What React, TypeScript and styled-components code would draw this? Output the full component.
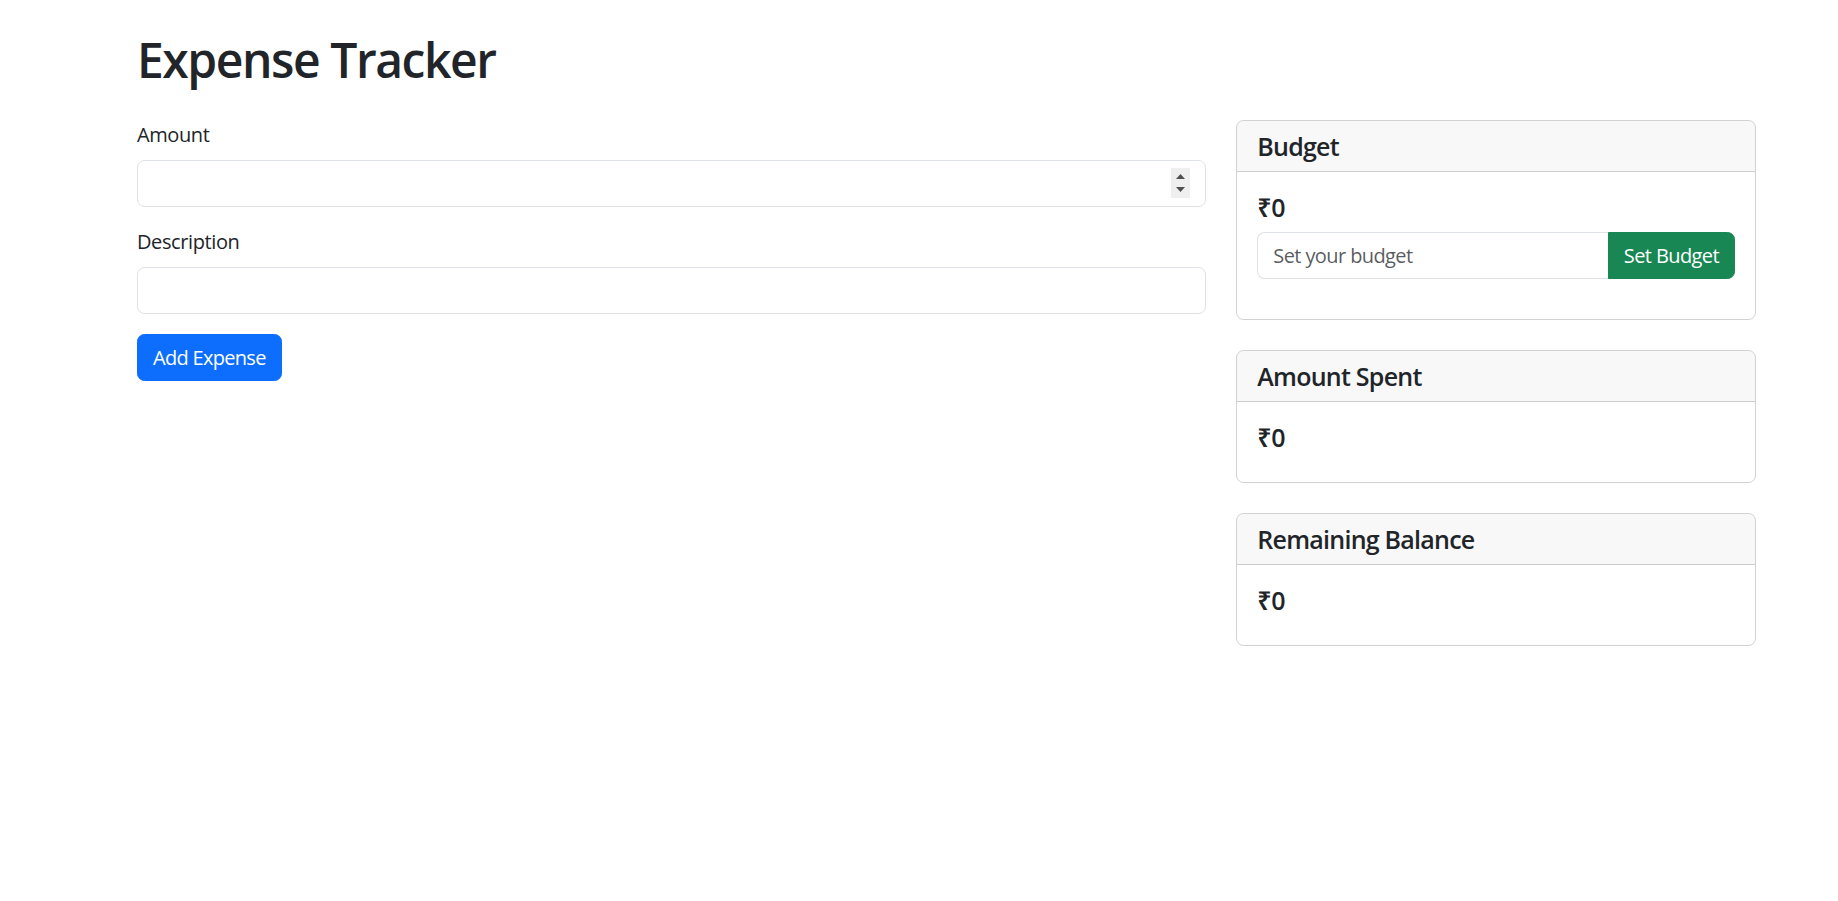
import React from 'react';
import styled, {createGlobalStyle} from "styled-components";

const GlobalStyle = createGlobalStyle`
    * {
        box-sizing: border-box;
    }

    body {
        margin: 0;
        background: #fff;
        color: #212529;
        font-family: "Open Sans", "Noto Sans", sans-serif;
        font-size: 20px;
        line-height: 1.5;
        letter-spacing: -0.02em;
    }
`

const cards = [
    {title: "Amount Spent", value: "₹0"},
    {title: "Remaining Balance", value: "₹0"},
]

export default function App() {
    return (
        <>
            <GlobalStyle/>
            <Container>
                <Title>Expense Tracker</Title>
                <Row>
                    <Col size={66.6667}>
                        <FormGroup>
                            <Label>Amount</Label>
                            <InputWrap>
                                <Input type="number"/>
                                <Spinner>
                                    <svg width="19" height="30" viewBox="0 0 19 30">
                                        <polygon points="5,11 9.5,6 14,11" fill="#505050"/>
                                        <polygon points="5,19 14,19 9.5,24" fill="#505050"/>
                                    </svg>
                                </Spinner>
                            </InputWrap>
                        </FormGroup>
                        <FormGroup>
                            <Label>Description</Label>
                            <Input type="text"/>
                        </FormGroup>
                        <Button color="#0d6efd">Add Expense</Button>
                    </Col>
                    <Col size={33.3333}>
                        <Card>
                            <CardHeader>Budget</CardHeader>
                            <CardBody>
                                <Value>₹0</Value>
                                <InputGroup>
                                    <GroupInput placeholder="Set your budget"/>
                                    <GroupButton>Set Budget</GroupButton>
                                </InputGroup>
                            </CardBody>
                        </Card>
                        {cards.map(card => (
                            <Card key={card.title}>
                                <CardHeader>{card.title}</CardHeader>
                                <CardBody>
                                    <Value>{card.value}</Value>
                                </CardBody>
                            </Card>
                        ))}
                    </Col>
                </Row>
            </Container>
        </>
    );
}

const Container = styled.div`
    padding: 0 82px 0 137px;
`

const Title = styled.h1`
    margin: 30px 0 30px;
    font-size: 48px;
    font-weight: 600;
    line-height: 1.25;
    letter-spacing: -0.03em;
`

const Row = styled.div`
    display: flex;
    margin: 0 -15px;
`

const Col = styled.div<{ size: number }>`
    flex: 0 0 ${props => props.size}%;
    max-width: ${props => props.size}%;
    padding: 0 15px;
`

const FormGroup = styled.div`
    margin-bottom: 20px;
`

const Label = styled.label`
    display: inline-block;
    margin-bottom: 10px;
`

const InputWrap = styled.div`
    position: relative;
`

const Input = styled.input`
    display: block;
    width: 100%;
    height: 47px;
    padding: 7px 15px;
    border: 1px solid #dee2e6;
    border-radius: 7.5px;
    background: #fff;
    color: #212529;
    font: inherit;
    outline: none;
    -moz-appearance: textfield;

    &::-webkit-inner-spin-button,
    &::-webkit-outer-spin-button {
        -webkit-appearance: none;
        margin: 0;
    }
`

const Spinner = styled.div`
    position: absolute;
    top: 8px;
    right: 16px;
    width: 19px;
    height: 30px;
    background: #efefef;
    display: flex;
`

const Button = styled.button<{ color: string }>`
    height: 47px;
    padding: 0 15px;
    border: 1px solid ${props => props.color};
    border-radius: 7.5px;
    background: ${props => props.color};
    color: #fff;
    font: inherit;
    letter-spacing: -0.035em;
    white-space: nowrap;
    cursor: pointer;
`

const Card = styled.div`
    margin-bottom: 30px;
    border: 1px solid rgba(0, 0, 0, 0.175);
    border-radius: 7.5px;
    overflow: hidden;
`

const CardHeader = styled.h5`
    margin: 0;
    padding: 10px 20px;
    background: rgba(33, 37, 41, 0.03);
    border-bottom: 1px solid rgba(0, 0, 0, 0.175);
    font-size: 25px;
    font-weight: 600;
    line-height: 1.2;
    letter-spacing: -0.03em;
`

const CardBody = styled.div`
    padding: 20px;
`

const Value = styled.h5`
    margin: 0 0 10px;
    font-size: 25px;
    font-weight: 600;
    line-height: 1.2;
`

const InputGroup = styled.div`
    display: flex;
    height: 47px;
    margin-bottom: 20px;
`

const GroupInput = styled.input`
    flex: 1;
    min-width: 0;
    padding: 7px 15px;
    border: 1px solid #dee2e6;
    border-right: none;
    border-radius: 7.5px 0 0 7.5px;
    color: #212529;
    font: inherit;
    letter-spacing: -0.03em;
    outline: none;

    &::placeholder {
        color: rgba(33, 37, 41, 0.75);
    }
`

const GroupButton = styled.button`
    flex: none;
    padding: 0 15px;
    border: 1px solid #198754;
    border-radius: 0 7.5px 7.5px 0;
    background: #198754;
    color: #fff;
    font: inherit;
    letter-spacing: -0.03em;
    white-space: nowrap;
    cursor: pointer;
`
